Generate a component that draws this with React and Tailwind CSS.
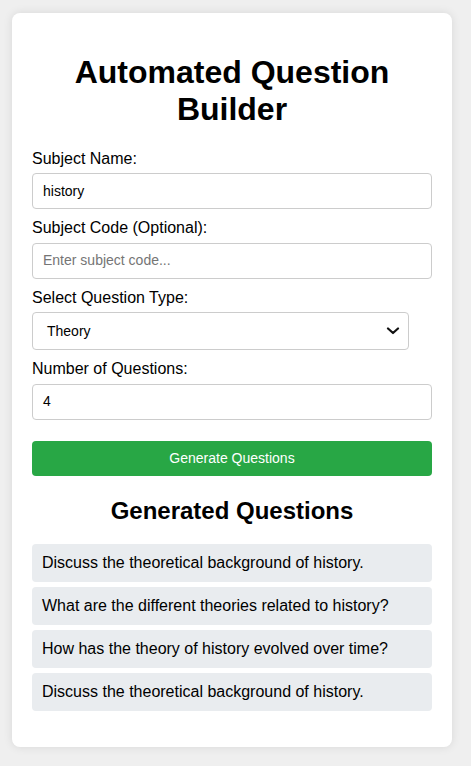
import React from "react";

export default function App() {
  const questions = [
    "Discuss the theoretical background of history.",
    "What are the different theories related to history?",
    "How has the theory of history evolved over time?",
    "Discuss the theoretical background of history.",
  ];
  return (
    <div
      className="min-h-screen w-full bg-[#efefef] pt-[13px] pl-[12px] pb-[19px]"
      style={{ fontFamily: '"Liberation Sans", Arial, sans-serif' }}
    >
      <div className="w-[440px] rounded-[8px] bg-white p-5 shadow-[0_0_10px_rgba(0,0,0,0.1)]">
        <h1 className="mt-[21px] mb-[22px] text-center text-[32px] font-bold leading-[37px] text-black">
          Automated Question Builder
        </h1>

        <label className="mb-[5px] block text-[16px] leading-[18.4px] text-black">Subject Name:</label>
        <div className="mb-[10px] flex h-[36px] w-[400px] items-center rounded-[4px] border border-[#cccccc] px-[10px] text-[14px] text-black">
          history
        </div>

        <label className="mb-[5px] block text-[16px] leading-[18.4px] text-black">Subject Code (Optional):</label>
        <div className="mb-[10px] flex h-[36px] w-[400px] items-center rounded-[4px] border border-[#cccccc] px-[10px] text-[14px] text-[#757575]">
          Enter subject code...
        </div>

        <label className="mb-[5px] block text-[16px] leading-[18.4px] text-black">Select Question Type:</label>
        <div className="mb-[10px] flex h-[38px] w-[377px] items-center justify-between rounded-[4px] border border-[#cccccc] pl-[14px] pr-[8px] text-[14px] text-black">
          <span>Theory</span>
          <svg width="14" height="8" viewBox="0 0 14 8" fill="none">
            <path d="M2 1.5 L7 6 L12 1.5" stroke="#111" strokeWidth="2.2" strokeLinecap="round" strokeLinejoin="round" />
          </svg>
        </div>

        <label className="mb-[5px] block text-[16px] leading-[18.4px] text-black">Number of Questions:</label>
        <div className="flex h-[36px] w-[400px] items-center rounded-[4px] border border-[#cccccc] px-[10px] text-[14px] text-black">
          4
        </div>

        <button className="mt-[21px] flex h-[35px] w-[400px] items-center justify-center rounded-[4px] bg-[#28a745] pt-[1px] text-[14px] text-white">
          Generate Questions
        </button>

        <h2 className="mt-[21px] mb-5 text-center text-[24px] font-bold leading-[27.6px] text-black">
          Generated Questions
        </h2>

        <ul className="mb-4">
          {questions.map((q, i) => (
            <li
              key={i}
              className="mb-[5px] rounded-[4px] bg-[#e9ecef] px-[10px] py-[10px] text-[16px] leading-[18px] text-black"
            >
              {q}
            </li>
          ))}
        </ul>
      </div>
    </div>
  );
}
